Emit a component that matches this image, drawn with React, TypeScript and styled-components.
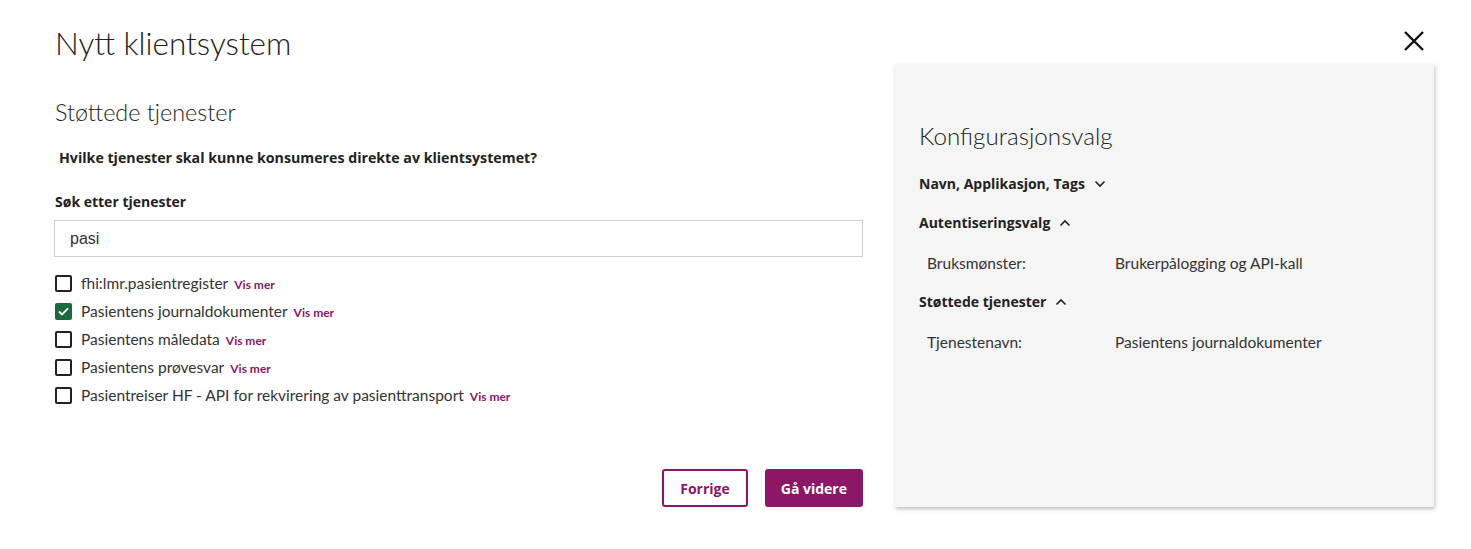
import React, { useState } from 'react';
import styled, { createGlobalStyle } from 'styled-components';

const GlobalStyle = createGlobalStyle`
  html, body {
    margin: 0;
    padding: 0;
    background: #ffffff;
    font-family: Lato, "Noto Sans", sans-serif;
    color: #222;
  }
`;

const boldFont = `"Open Sans", Lato, sans-serif`;

const Page = styled.div`
  width: 1471px;
  height: 549px;
  box-sizing: border-box;
  padding: 0 37px 0 55px;
`;

const Header = styled.div`
  display: flex;
  justify-content: space-between;
  align-items: flex-start;
  height: 64px;
`;

const Title = styled.h1`
  margin: 25px 0 0;
  font-size: 31.5px;
  font-weight: 300;
  line-height: 36px;
  color: #222;
`;

const CloseButton = styled.button`
  margin: 28px 7px 0 0;
  padding: 0;
  border: none;
  background: none;
  width: 26px;
  height: 26px;
  cursor: pointer;
  display: flex;
  align-items: center;
  justify-content: center;
`;

const Body = styled.div`
  display: flex;
  gap: 32px;
`;

const Main = styled.div`
  width: 808px;
  display: flex;
  flex-direction: column;
`;

const SectionTitle = styled.h2`
  margin: 34px 0 0;
  font-size: 23.4px;
  font-weight: 300;
  line-height: 28px;
  color: #222;
`;

const Question = styled.p`
  margin: 22px 0 0 4px;
  font-family: ${boldFont};
  font-size: 14.2px;
  font-weight: 700;
  line-height: 20px;
`;

const FieldLabel = styled.label`
  margin: 24px 0 0;
  font-family: ${boldFont};
  font-size: 14px;
  font-weight: 700;
  line-height: 20px;
`;

const SearchInput = styled.input`
  margin-top: 8px;
  height: 37px;
  box-sizing: border-box;
  width: 809px;
  margin-left: -1px;
  border: 1px solid #cfcfcf;
  padding: 0 15px;
  font-family: "Liberation Sans", Arial, sans-serif;
  font-size: 16px;
  color: #333;
  outline: none;
`;

const OptionList = styled.ul`
  list-style: none;
  margin: 17px 0 0;
  padding: 0;
  display: flex;
  flex-direction: column;
  gap: 10px;
`;

const OptionRow = styled.li`
  display: flex;
  align-items: center;
  height: 18px;
`;

const Box = styled.span<{ $checked: boolean }>`
  width: 17px;
  height: 17px;
  box-sizing: border-box;
  border-radius: 2px;
  border: 2px solid ${({ $checked }) => ($checked ? '#1a6a3c' : '#222')};
  background: ${({ $checked }) => ($checked ? '#1a6a3c' : '#fff')};
  display: flex;
  align-items: center;
  justify-content: center;
  margin-right: 9px;
  flex-shrink: 0;
  cursor: pointer;
`;

const OptionText = styled.span`
  font-size: 15.5px;
  color: #333;
  line-height: 18px;
`;

const MoreLink = styled.a`
  margin-left: 6px;
  font-size: 12px;
  font-weight: 700;
  color: #8c1767;
  text-decoration: none;
  padding-top: 2px;
  cursor: pointer;
`;

const Actions = styled.div`
  display: flex;
  justify-content: flex-end;
  gap: 17px;
  margin-top: 65px;
`;

const Button = styled.button<{ $primary?: boolean }>`
  height: 38px;
  padding: 0 ${({ $primary }) => ($primary ? 14 : 16)}px;
  border-radius: 3px;
  border: 2px solid #8c1767;
  background: ${({ $primary }) => ($primary ? '#8c1767' : '#fff')};
  color: ${({ $primary }) => ($primary ? '#fff' : '#8c1767')};
  font-family: ${boldFont};
  font-size: 14px;
  font-weight: 700;
  cursor: pointer;
`;

const Panel = styled.aside`
  width: 539px;
  height: 443px;
  box-sizing: border-box;
  background: #f5f5f5;
  box-shadow: 1px 2px 4px rgba(0, 0, 0, 0.25);
  padding: 58px 24px 0;
`;

const PanelTitle = styled.h2`
  margin: 0;
  font-size: 24.2px;
  font-weight: 300;
  line-height: 28px;
  color: #222;
`;

const Group = styled.div<{ $gap: number }>`
  margin-top: ${({ $gap }) => $gap}px;
`;

const GroupHeader = styled.button`
  display: flex;
  align-items: center;
  gap: 9px;
  padding: 0;
  border: none;
  background: none;
  font-family: ${boldFont};
  font-size: 14px;
  font-weight: 700;
  color: #222;
  line-height: 20px;
  cursor: pointer;
`;

const InfoRow = styled.div`
  display: grid;
  grid-template-columns: 188px 1fr;
  padding-left: 8px;
  margin-top: 21px;
  margin-bottom: 10px;
  font-size: 15.5px;
  line-height: 18px;
  color: #333;
`;

const Chevron = ({ up }: { up?: boolean }) => (
  <svg width="12" height="8" viewBox="0 0 12 8" fill="none">
    <path
      d={up ? 'M1.5 6.5 L6 2 L10.5 6.5' : 'M1.5 1.5 L6 6 L10.5 1.5'}
      stroke="#222"
      strokeWidth="1.6"
    />
  </svg>
);

const Check = () => (
  <svg width="11" height="9" viewBox="0 0 11 9" fill="none">
    <path d="M1 4.5 L4 7.5 L10 1.3" stroke="#fff" strokeWidth="1.8" />
  </svg>
);

const services = [
  { name: 'fhi:lmr.pasientregister', checked: false },
  { name: 'Pasientens journaldokumenter', checked: true },
  { name: 'Pasientens måledata', checked: false },
  { name: 'Pasientens prøvesvar', checked: false },
  { name: 'Pasientreiser HF - API for rekvirering av pasienttransport', checked: false },
];

const App: React.FC = () => {
  const [items, setItems] = useState(services);
  const [query, setQuery] = useState('pasi');

  const toggle = (index: number) => {
    setItems(prev => prev.map((s, i) => (i === index ? { ...s, checked: !s.checked } : s)));
  };

  return (
    <>
      <GlobalStyle />
      <Page>
        <Header>
          <Title>Nytt klientsystem</Title>
          <CloseButton aria-label="Lukk">
            <svg width="22" height="22" viewBox="0 0 22 22">
              <path d="M2 2 L20 20 M20 2 L2 20" stroke="#111" strokeWidth="2.4" />
            </svg>
          </CloseButton>
        </Header>
        <Body>
          <Main>
            <SectionTitle>Støttede tjenester</SectionTitle>
            <Question>Hvilke tjenester skal kunne konsumeres direkte av klientsystemet?</Question>
            <FieldLabel htmlFor="search">Søk etter tjenester</FieldLabel>
            <SearchInput id="search" value={query} spellCheck onChange={e => setQuery(e.target.value)} />
            <OptionList>
              {items.map((s, i) => (
                <OptionRow key={s.name}>
                  <Box $checked={s.checked} onClick={() => toggle(i)}>
                    {s.checked && <Check />}
                  </Box>
                  <OptionText>{s.name}</OptionText>
                  <MoreLink>Vis mer</MoreLink>
                </OptionRow>
              ))}
            </OptionList>
            <Actions>
              <Button>Forrige</Button>
              <Button $primary>Gå videre</Button>
            </Actions>
          </Main>
          <Panel>
            <PanelTitle>Konfigurasjonsvalg</PanelTitle>
            <Group $gap={24}>
              <GroupHeader>
                Navn, Applikasjon, Tags <Chevron />
              </GroupHeader>
            </Group>
            <Group $gap={19}>
              <GroupHeader>
                Autentiseringsvalg <Chevron up />
              </GroupHeader>
              <InfoRow>
                <span>Bruksmønster:</span>
                <span>Brukerpålogging og API-kall</span>
              </InfoRow>
            </Group>
            <Group $gap={20}>
              <GroupHeader>
                Støttede tjenester <Chevron up />
              </GroupHeader>
              <InfoRow>
                <span>Tjenestenavn:</span>
                <span>Pasientens journaldokumenter</span>
              </InfoRow>
            </Group>
          </Panel>
        </Body>
      </Page>
    </>
  );
};

export default App;
